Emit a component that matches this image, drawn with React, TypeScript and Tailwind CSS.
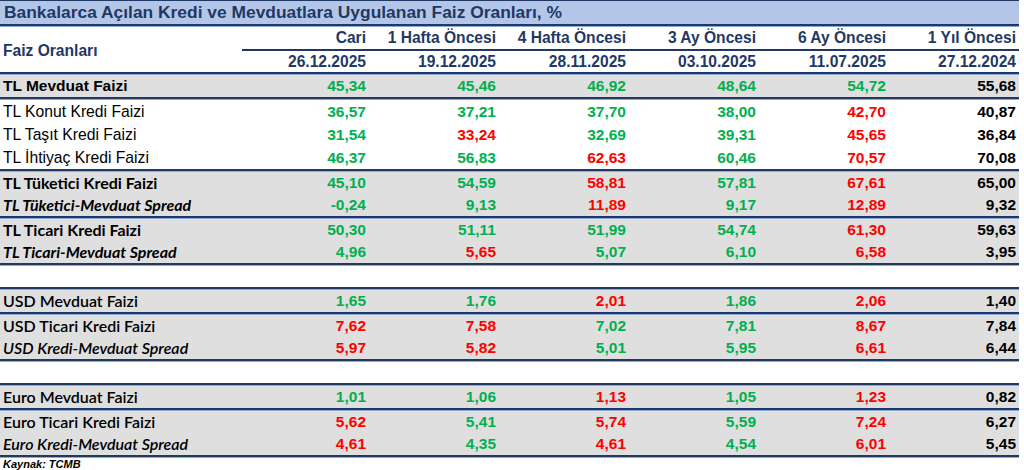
import React from 'react';

type Tone = 'g' | 'r' | 'k';
type Row = {
  label: string;
  labelClass: string;
  values: [string, Tone][];
};

const toneClass: Record<Tone, string> = {
  g: 'text-[#00b050]',
  r: 'text-[#ff0000]',
  k: 'text-black',
};

// label styles
const arialBold = "font-['Liberation_Sans',Arial,sans-serif] font-bold text-[15.5px]";
const arialReg = "font-['Liberation_Sans',Arial,sans-serif] text-[15.7px]";
const caliBold = "font-['Lato','Noto_Sans',sans-serif] font-bold text-[16px]";
const caliBoldIt = "font-['Lato','Noto_Sans',sans-serif] font-bold italic text-[16px]";
const caliReg = "font-['Lato','Noto_Sans',sans-serif] font-semibold text-[16px]";
const caliRegIt = "font-['Lato','Noto_Sans',sans-serif] font-semibold italic text-[16px]";

const v = (s: string): [string, Tone][] =>
  s.split(' ').map((p) => {
    const [num, t] = p.split('|');
    return [num, t as Tone];
  });

const sections: { gray: boolean; gapBefore?: boolean; rows: Row[]; rowH: string }[] = [
  {
    gray: true,
    rowH: 'h-[22px]',
    rows: [
      { label: 'TL Mevduat Faizi', labelClass: arialBold, values: v('45,34|g 45,46|g 46,92|g 48,64|g 54,72|g 55,68|k') },
    ],
  },
  {
    gray: false,
    rowH: 'h-[23px]',
    rows: [
      { label: 'TL Konut Kredi Faizi', labelClass: arialReg, values: v('36,57|g 37,21|g 37,70|g 38,00|g 42,70|r 40,87|k') },
      { label: 'TL Taşıt Kredi Faizi', labelClass: arialReg, values: v('31,54|g 33,24|r 32,69|g 39,31|g 45,65|r 36,84|k') },
      { label: 'TL İhtiyaç Kredi Faizi', labelClass: arialReg, values: v('46,37|g 56,83|g 62,63|r 60,46|g 70,57|r 70,08|k') },
    ],
  },
  {
    gray: true,
    rowH: 'h-[22px]',
    rows: [
      { label: 'TL Tüketici Kredi Faizi', labelClass: caliBold, values: v('45,10|g 54,59|g 58,81|r 57,81|g 67,61|r 65,00|k') },
      { label: 'TL Tüketici-Mevduat Spread', labelClass: caliBoldIt, values: v('-0,24|g 9,13|g 11,89|r 9,17|g 12,89|r 9,32|k') },
    ],
  },
  {
    gray: true,
    rowH: 'h-[22px]',
    rows: [
      { label: 'TL Ticari Kredi Faizi', labelClass: caliBold, values: v('50,30|g 51,11|g 51,99|g 54,74|g 61,30|r 59,63|k') },
      { label: 'TL Ticari-Mevduat Spread', labelClass: caliBoldIt, values: v('4,96|g 5,65|r 5,07|g 6,10|g 6,58|r 3,95|k') },
    ],
  },
  {
    gray: true,
    gapBefore: true,
    rowH: 'h-[22px]',
    rows: [
      { label: 'USD Mevduat Faizi', labelClass: caliReg, values: v('1,65|g 1,76|g 2,01|r 1,86|g 2,06|r 1,40|k') },
    ],
  },
  {
    gray: true,
    rowH: 'h-[22px]',
    rows: [
      { label: 'USD Ticari Kredi Faizi', labelClass: caliReg, values: v('7,62|r 7,58|r 7,02|g 7,81|g 8,67|r 7,84|k') },
      { label: 'USD Kredi-Mevduat Spread', labelClass: caliRegIt, values: v('5,97|r 5,82|r 5,01|g 5,95|g 6,61|r 6,44|k') },
    ],
  },
  {
    gray: true,
    gapBefore: true,
    rowH: 'h-[22px]',
    rows: [
      { label: 'Euro Mevduat Faizi', labelClass: caliReg, values: v('1,01|g 1,06|g 1,13|r 1,05|g 1,23|r 0,82|k') },
    ],
  },
  {
    gray: true,
    rowH: 'h-[22px]',
    rows: [
      { label: 'Euro Ticari Kredi Faizi', labelClass: caliReg, values: v('5,62|r 5,41|g 5,74|r 5,59|g 7,24|r 6,27|k') },
      { label: 'Euro Kredi-Mevduat Spread', labelClass: caliRegIt, values: v('4,61|r 4,35|g 4,61|r 4,54|g 6,01|r 5,45|k') },
    ],
  },
];

const columns = [
  { name: 'Cari', date: '26.12.2025' },
  { name: '1 Hafta Öncesi', date: '19.12.2025' },
  { name: '4 Hafta Öncesi', date: '28.11.2025' },
  { name: '3 Ay Öncesi', date: '03.10.2025' },
  { name: '6 Ay Öncesi', date: '11.07.2025' },
  { name: '1 Yıl Öncesi', date: '27.12.2024' },
];

const Sep = () => <div className="h-[3px] bg-[#1f3864] border-b border-[#8ea9db]" />;

export default function App() {
  return (
    <div className="w-[1024px] h-[470px] bg-white font-['Liberation_Sans',Arial,sans-serif] overflow-hidden">
      <div className="w-[1019px]">
        {/* Title */}
        <div className="h-[27px] border-t border-[#1f3864] bg-[#b4c6e7] flex flex-col">
          <div className="flex-1 flex items-center pl-[4px] text-[17.4px] font-bold text-[#1f3864] leading-none">
            Bankalarca Açılan Kredi ve Mevduatlara Uygulanan Faiz Oranları, %
          </div>
          <Sep />
        </div>

        {/* Column header */}
        <div className="grid grid-cols-[239px_repeat(6,130px)] text-[#1f3864] font-bold text-[15.6px] leading-none">
          <div className="row-span-3 flex items-center pl-[3px] pt-[2px]">Faiz Oranları</div>
          {columns.map((c) => (
            <div key={c.name} className="h-[22px] flex items-end justify-end pr-[3px] pb-[3px]">
              {c.name}
            </div>
          ))}
          <div className="col-span-6 ml-[3px] h-[2px] bg-[#1f3864]" />
          {columns.map((c) => (
            <div key={c.date} className="h-[21px] flex items-center justify-end pr-[3px]">
              {c.date}
            </div>
          ))}
        </div>
        <Sep />

        {sections.map((s, i) => (
          <div key={i}>
            {s.gapBefore && (
              <>
                <div className="h-[21px]" />
                <Sep />
              </>
            )}
            <div className={s.gray ? 'bg-[#dfdfdf]' : 'bg-white'}>
              {s.rows.map((r) => (
                <div key={r.label} className={`grid grid-cols-[239px_repeat(6,130px)] items-center ${s.rowH}`}>
                  <div className={`pl-[3px] text-black leading-none whitespace-nowrap ${r.labelClass}`}>{r.label}</div>
                  {r.values.map(([num, t], j) => (
                    <div key={j} className={`text-right pr-[3px] font-bold text-[15.5px] leading-none ${toneClass[t]}`}>
                      {num}
                    </div>
                  ))}
                </div>
              ))}
            </div>
            <Sep />
          </div>
        ))}

        <div className="pl-[3px] pt-[1px] text-[11px] font-bold italic text-black leading-none">Kaynak: TCMB</div>
      </div>
    </div>
  );
}
